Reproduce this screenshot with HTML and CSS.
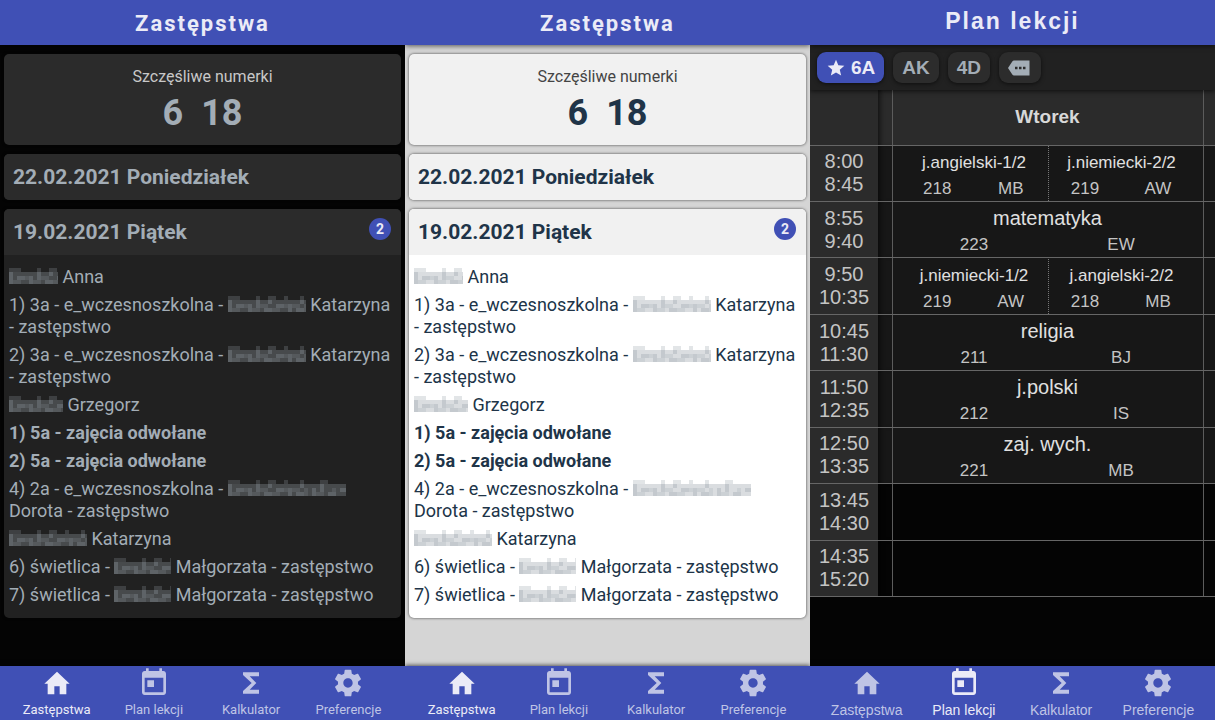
FILE: index.html
```html
<!DOCTYPE html>
<html lang="pl">
<head>
<meta charset="utf-8">
<meta name="viewport" content="width=device-width, initial-scale=1">
<title>Zastępstwa i plan lekcji</title>
<link rel="stylesheet" href="styles.css">
</head>
<body>
<svg class="sprite" aria-hidden="true">
  <symbol id="home" viewBox="0 0 24 24"><path d="M12 3.6 2.5 12.5H5v7.9h5v-6h4v6h5v-7.9h2.5z"/></symbol>
  <symbol id="today" viewBox="0 0 24 24"><path d="M19 3h-1V1h-2v2H8V1H6v2H5c-1.100 0-2 .9-2 2v14c0 1.100.9 2 2 2h14c1.100 0 2-.9 2-2V5c0-1.100-.9-2-2-2zm0 16H5V8h14v11zM7 10h5v5H7z"/></symbol>
  <symbol id="sigma" viewBox="0 0 24 24"><path d="M18 4H6v2l6.500 6L6 18v2h12v-3h-7l5-5-5-5h7z"/></symbol>
  <symbol id="gear" viewBox="0 0 24 24"><path d="M19.430 12.980c.04-.32.070-.64.070-.98s-.03-.66-.07-.98l2.110-1.650c.19-.15.240-.42.120-.64l-2-3.460c-.12-.22-.39-.3-.61-.22l-2.490 1c-.52-.4-1.080-.73-1.690-.98l-.38-2.650C14.460 2.180 14.250 2 14 2h-4c-.25 0-.46.180-.49.420l-.38 2.650c-.61.250-1.170.590-1.690.980l-2.490-1c-.23-.09-.49 0-.61.220l-2 3.460c-.13.220-.07.490.120.640l2.110 1.650c-.04.320-.07.650-.07.980s.03.660.070.980l-2.110 1.650c-.19.150-.24.420-.12.640l2 3.460c.12.220.390.300.610.220l2.490-1c.52.400 1.080.730 1.690.980l.38 2.650c.03.240.240.420.490.420h4c.25 0 .46-.18.490-.42l.38-2.650c.61-.25 1.170-.59 1.690-.98l2.490 1c.23.090.490 0 .61-.22l2-3.460c.12-.22.070-.49-.12-.64l-2.110-1.650zM12 15.500c-1.930 0-3.500-1.570-3.500-3.500s1.570-3.500 3.500-3.500 3.500 1.570 3.500 3.500-1.570 3.500-3.500 3.500z"/></symbol>
  <symbol id="star" viewBox="0 0 24 24"><path d="M12 17.270 18.180 21l-1.640-7.030L22 9.240l-7.190-.61L12 2 9.190 8.630 2 9.240l5.460 4.730L5.820 21z"/></symbol>
  <symbol id="tag" viewBox="0 0 24 18"><path fill-rule="evenodd" d="M6 1.500h15.500v15H6c-.7 0-1.300-.4-1.700-1L0 9l4.300-6.500c.4-.6 1-1 1.700-1zM7 7.800v2.500h2.500v-2.500zm4 0v2.500h2.500v-2.500zm4 0v2.500h2.500v-2.500z"/></symbol>
  <symbol id="mosaic">
    <path opacity=".45" d="M0 4h120v12H0z"/>
    <path opacity=".35" d="M0 0h12v4H0zM28 0h4v4h-4zM40 0h8v4h-8zM56 0h4v4h-4zM72 0h4v4h-4zM92 0h8v4h-8z"/>
    <path opacity=".5" d="M0 4h4v12H0zM8 8h8v4H8zM20 8h4v8h-4zM28 4h4v8h-4zM36 12h8v4h-8zM40 4h4v4h-4zM48 8h8v4h-8zM60 8h4v8h-4zM68 12h8v4h-8zM72 4h4v4h-4zM84 8h4v8h-4zM92 4h4v8h-4zM100 12h8v4h-8zM112 8h8v4h-8z"/>
    <path opacity=".3" d="M4 12h8v4H4zM16 8h4v4h-4zM24 12h8v4h-8zM32 8h8v4h-8zM44 12h8v4h-8zM56 8h4v4h-4zM64 8h8v4h-8zM76 8h4v8h-4zM88 12h8v4h-8zM104 8h4v4h-4z"/>
  </symbol>
</svg>

<div class="screens">
  <section class="screen roboto dark">
    <header class="bar"><h1>Zastępstwa</h1></header>
    <main class="feed">
      <article class="card lucky">
        <p class="lucky-label">Szczęśliwe numerki</p>
        <p class="lucky-numbers"><span>6</span><span>18</span></p>
      </article>
      <article class="card"><h2 class="day">22.02.2021 Poniedziałek</h2></article>
      <article class="card">
        <h2 class="day">19.02.2021 Piątek <span class="badge">2</span></h2>
        <ul class="subs">
          <li><svg class="hidden w49" aria-hidden="true"><use href="#mosaic"/></svg> Anna</li>
          <li>1) 3a - e_wczesnoszkolna - <svg class="hidden w78" aria-hidden="true"><use href="#mosaic"/></svg> Katarzyna <span>- zastępstwo</span></li>
          <li>2) 3a - e_wczesnoszkolna - <svg class="hidden w78" aria-hidden="true"><use href="#mosaic"/></svg> Katarzyna <span>- zastępstwo</span></li>
          <li><svg class="hidden w54" aria-hidden="true"><use href="#mosaic"/></svg> Grzegorz</li>
          <li class="cancelled">1) 5a - zajęcia odwołane</li>
          <li class="cancelled">2) 5a - zajęcia odwołane</li>
          <li>4) 2a - e_wczesnoszkolna - <svg class="hidden w118" aria-hidden="true"><use href="#mosaic"/></svg> Dorota - zastępstwo</li>
          <li><svg class="hidden w78" aria-hidden="true"><use href="#mosaic"/></svg> Katarzyna</li>
          <li>6) świetlica - <svg class="hidden w57" aria-hidden="true"><use href="#mosaic"/></svg> Małgorzata - zastępstwo</li>
          <li>7) świetlica - <svg class="hidden w57" aria-hidden="true"><use href="#mosaic"/></svg> Małgorzata - zastępstwo</li>
        </ul>
      </article>
    </main>
    <nav class="tabs">
      <a class="tab active" href="#"><svg><use href="#home"/></svg>Zastępstwa</a>
      <a class="tab" href="#"><svg><use href="#today"/></svg>Plan lekcji</a>
      <a class="tab" href="#"><svg><use href="#sigma"/></svg>Kalkulator</a>
      <a class="tab" href="#"><svg><use href="#gear"/></svg>Preferencje</a>
    </nav>
  </section>

  <section class="screen roboto light">
    <header class="bar"><h1>Zastępstwa</h1></header>
    <main class="feed">
      <article class="card lucky">
        <p class="lucky-label">Szczęśliwe numerki</p>
        <p class="lucky-numbers"><span>6</span><span>18</span></p>
      </article>
      <article class="card"><h2 class="day">22.02.2021 Poniedziałek</h2></article>
      <article class="card">
        <h2 class="day">19.02.2021 Piątek <span class="badge">2</span></h2>
        <ul class="subs">
          <li><svg class="hidden w49" aria-hidden="true"><use href="#mosaic"/></svg> Anna</li>
          <li>1) 3a - e_wczesnoszkolna - <svg class="hidden w78" aria-hidden="true"><use href="#mosaic"/></svg> Katarzyna <span>- zastępstwo</span></li>
          <li>2) 3a - e_wczesnoszkolna - <svg class="hidden w78" aria-hidden="true"><use href="#mosaic"/></svg> Katarzyna <span>- zastępstwo</span></li>
          <li><svg class="hidden w54" aria-hidden="true"><use href="#mosaic"/></svg> Grzegorz</li>
          <li class="cancelled">1) 5a - zajęcia odwołane</li>
          <li class="cancelled">2) 5a - zajęcia odwołane</li>
          <li>4) 2a - e_wczesnoszkolna - <svg class="hidden w118" aria-hidden="true"><use href="#mosaic"/></svg> Dorota - zastępstwo</li>
          <li><svg class="hidden w78" aria-hidden="true"><use href="#mosaic"/></svg> Katarzyna</li>
          <li>6) świetlica - <svg class="hidden w57" aria-hidden="true"><use href="#mosaic"/></svg> Małgorzata - zastępstwo</li>
          <li>7) świetlica - <svg class="hidden w57" aria-hidden="true"><use href="#mosaic"/></svg> Małgorzata - zastępstwo</li>
        </ul>
      </article>
    </main>
    <nav class="tabs">
      <a class="tab active" href="#"><svg><use href="#home"/></svg>Zastępstwa</a>
      <a class="tab" href="#"><svg><use href="#today"/></svg>Plan lekcji</a>
      <a class="tab" href="#"><svg><use href="#sigma"/></svg>Kalkulator</a>
      <a class="tab" href="#"><svg><use href="#gear"/></svg>Preferencje</a>
    </nav>
  </section>

  <section class="screen plan dark">
    <header class="bar"><h1>Plan lekcji</h1></header>
    <main class="timetable">
      <div class="chips">
        <button class="chip selected" type="button"><svg class="star"><use href="#star"/></svg>6A</button>
        <button class="chip" type="button">AK</button>
        <button class="chip" type="button">4D</button>
        <button class="chip" type="button" aria-label="Więcej"><svg class="tag"><use href="#tag"/></svg></button>
      </div>
      <table class="grid">
        <colgroup><col class="c-time"><col class="c-prev"><col><col class="c-next"></colgroup>
        <thead><tr><th class="time"></th><th class="prev"></th><th>Wtorek</th><th></th></tr></thead>
        <tbody>
          <tr><th class="time">8:00<br>8:45</th><td class="prev"></td><td><div class="split">
            <div class="lesson"><span class="name">j.angielski-1/2</span><span>218</span><span>MB</span></div>
            <div class="lesson"><span class="name">j.niemiecki-2/2</span><span>219</span><span>AW</span></div></div></td><td></td></tr>
          <tr><th class="time">8:55<br>9:40</th><td class="prev"></td><td><div class="lesson whole"><span class="name">matematyka</span><span>223</span><span>EW</span></div></td><td></td></tr>
          <tr><th class="time">9:50<br>10:35</th><td class="prev"></td><td><div class="split">
            <div class="lesson"><span class="name">j.niemiecki-1/2</span><span>219</span><span>AW</span></div>
            <div class="lesson"><span class="name">j.angielski-2/2</span><span>218</span><span>MB</span></div></div></td><td></td></tr>
          <tr><th class="time">10:45<br>11:30</th><td class="prev"></td><td><div class="lesson whole"><span class="name">religia</span><span>211</span><span>BJ</span></div></td><td></td></tr>
          <tr><th class="time">11:50<br>12:35</th><td class="prev"></td><td><div class="lesson whole"><span class="name">j.polski</span><span>212</span><span>IS</span></div></td><td></td></tr>
          <tr><th class="time">12:50<br>13:35</th><td class="prev"></td><td><div class="lesson whole"><span class="name">zaj. wych.</span><span>221</span><span>MB</span></div></td><td></td></tr>
          <tr class="free"><th class="time">13:45<br>14:30</th><td class="prev"></td><td></td><td></td></tr>
          <tr class="free"><th class="time">14:35<br>15:20</th><td class="prev"></td><td></td><td></td></tr>
        </tbody>
      </table>
    </main>
    <nav class="tabs">
      <a class="tab" href="#"><svg><use href="#home"/></svg>Zastępstwa</a>
      <a class="tab active" href="#"><svg><use href="#today"/></svg>Plan lekcji</a>
      <a class="tab" href="#"><svg><use href="#sigma"/></svg>Kalkulator</a>
      <a class="tab" href="#"><svg><use href="#gear"/></svg>Preferencje</a>
    </nav>
  </section>
</div>
</body>
</html>
```
FILE: styles.css
```css
* { box-sizing: border-box; }

body, h1, h2, p, ul { margin: 0; padding: 0; }

svg { fill: currentColor; }

.sprite { display: none; }

.screens {
  display: grid;
  grid-template-columns: repeat(3, 1fr);
  min-height: 100vh;
}

.screen {
  display: flex;
  flex-direction: column;
  min-width: 0;
  overflow: hidden;
  background: var(--page);
  color: var(--text);
}

.dark {
  --page: #040404;
  --head: #2b2b2b;
  --card: #212121;
  --text: #a3adb6;
  --label: #c8c8c8;
  --mosaic: .65;
  --edge: rgba(0, 0, 0, .6);
}

.light {
  --page: #d5d5d5;
  --head: #f1f1f1;
  --card: #ffffff;
  --text: #203448;
  --label: #444444;
  --mosaic: .36;
  --edge: rgba(0, 0, 0, .7);
}

.roboto { font-family: Roboto, sans-serif; }

.plan { font-family: "Liberation Sans", Arial, sans-serif; }

/* Top bar */
.bar {
  z-index: 1;
  padding: 10px 0 7px;
  background: #4050b5;
  color: #ebebf7;
  text-align: center;
  box-shadow: 0 1px 5px rgba(0, 0, 0, .6);
}

.bar h1 {
  font-size: 22px;
  line-height: 28px;
  letter-spacing: 2px;
}

.plan .bar { padding: 7px 0 10px; }

.plan .bar h1 { font-size: 23px; }

/* Substitutions */
.feed {
  flex: 1;
  display: flex;
  flex-direction: column;
  gap: 9px;
  padding: 9px 4px;
}

.card {
  border-radius: 5px;
  overflow: hidden;
  background: var(--card);
  box-shadow: 0 0 3px var(--edge);
}

.lucky {
  padding: 13px 0 6px;
  background: var(--head);
  text-align: center;
}

.lucky-label {
  color: var(--label);
  font-size: 16px;
  line-height: 20px;
}

.lucky-numbers {
  display: flex;
  justify-content: center;
  gap: 18px;
  font-size: 36px;
  font-weight: 700;
  line-height: 52px;
}

.day {
  display: flex;
  align-items: flex-start;
  justify-content: space-between;
  padding: 9px 10px 9px 9px;
  background: var(--head);
  font-size: 21px;
  line-height: 28px;
}

.badge {
  width: 22px;
  border-radius: 50%;
  background: #4050b5;
  color: #ebebf7;
  font-size: 14px;
  line-height: 22px;
  text-align: center;
}

.subs {
  display: flex;
  flex-direction: column;
  gap: 6px;
  padding: 11px 5px 12px;
  list-style: none;
  font-size: 18px;
  line-height: 22px;
}

.cancelled { font-weight: 700; }

.hidden {
  height: 16px;
  vertical-align: -1px;
  opacity: var(--mosaic);
}

.w49 { width: 49px; }
.w54 { width: 54px; }
.w57 { width: 57px; }
.w78 { width: 78px; }
.w118 { width: 118px; }

/* Bottom tabs */
.tabs {
  z-index: 1;
  display: grid;
  grid-template-columns: repeat(4, 1fr);
  padding: 1px 8px 2px;
  background: #4050b5;
  box-shadow: 0 -1px 4px rgba(0, 0, 0, .6);
}

.tab {
  display: flex;
  flex-direction: column;
  align-items: center;
  gap: 3px;
  color: #bfc4e5;
  font-size: 14px;
  line-height: 16px;
  text-decoration: none;
  white-space: nowrap;
}

.roboto .tab { font-size: 13px; }

.tab svg {
  width: 32px;
  height: 32px;
}

.tab.active { color: #ebebf7; }

/* Timetable */
.timetable { flex: 1; }

.chips {
  position: relative;
  display: flex;
  gap: 9px;
  padding: 7px;
  background: #212121;
  box-shadow: 0 1px 5px rgba(0, 0, 0, .7);
}

.chip {
  display: flex;
  align-items: center;
  gap: 5px;
  height: 31px;
  padding: 0 9px;
  border: 0;
  border-radius: 9px;
  background: #2c2c2c;
  color: #a3adb6;
  font: 700 19px/30px "Liberation Sans", Arial, sans-serif;
  box-shadow: 0 1px 4px rgba(0, 0, 0, .6);
}

.chip.selected {
  background: #4050b5;
  color: #ebebf7;
}

.star {
  width: 20px;
  height: 20px;
}

.tag {
  width: 24px;
  height: 18px;
}

.grid {
  width: 100%;
  height: 507px;
  table-layout: fixed;
  border-collapse: collapse;
  color: #d8d8d8;
}

.grid tbody tr { height: 56px; }

.c-time { width: 68px; }
.c-prev { width: 14px; }
.c-next { width: 12px; }

.grid th, .grid td {
  padding: 0;
  border-bottom: 1px solid #666666;
}

.grid td {
  padding: 0 8px;
  background: #171717;
}

.grid .prev, .grid td:last-child { padding: 0; }

.grid td + td, .grid th + th.prev + th, .grid thead th:last-child {
  border-left: 1px solid #5c5c5c;
}

.grid thead th {
  height: 55px;
  background: #2b2b2b;
  font-size: 19px;
}

.grid .free td { background: #040404; }

.grid .time {
  background: #2b2b2b;
  color: #c4c4c4;
  font-size: 20px;
  font-weight: 400;
  line-height: 23px;
  text-align: center;
}

.grid .prev { box-shadow: inset 5px 0 5px -3px rgba(0, 0, 0, .6); }

.split {
  display: grid;
  grid-template-columns: 1fr 1fr;
}

.lesson {
  display: grid;
  grid-template-columns: 1fr 1fr;
  padding-top: 3px;
  color: #c4c4c4;
  font-size: 17px;
  line-height: 25px;
  text-align: center;
}

.lesson + .lesson { border-left: 1px dotted #777777; }

.name {
  grid-column: 1 / -1;
  color: #e0e0e0;
  line-height: 27px;
}

.split .name { line-height: 28px; }

.split .lesson { line-height: 24px; }

.whole .name { font-size: 20px; }
```
